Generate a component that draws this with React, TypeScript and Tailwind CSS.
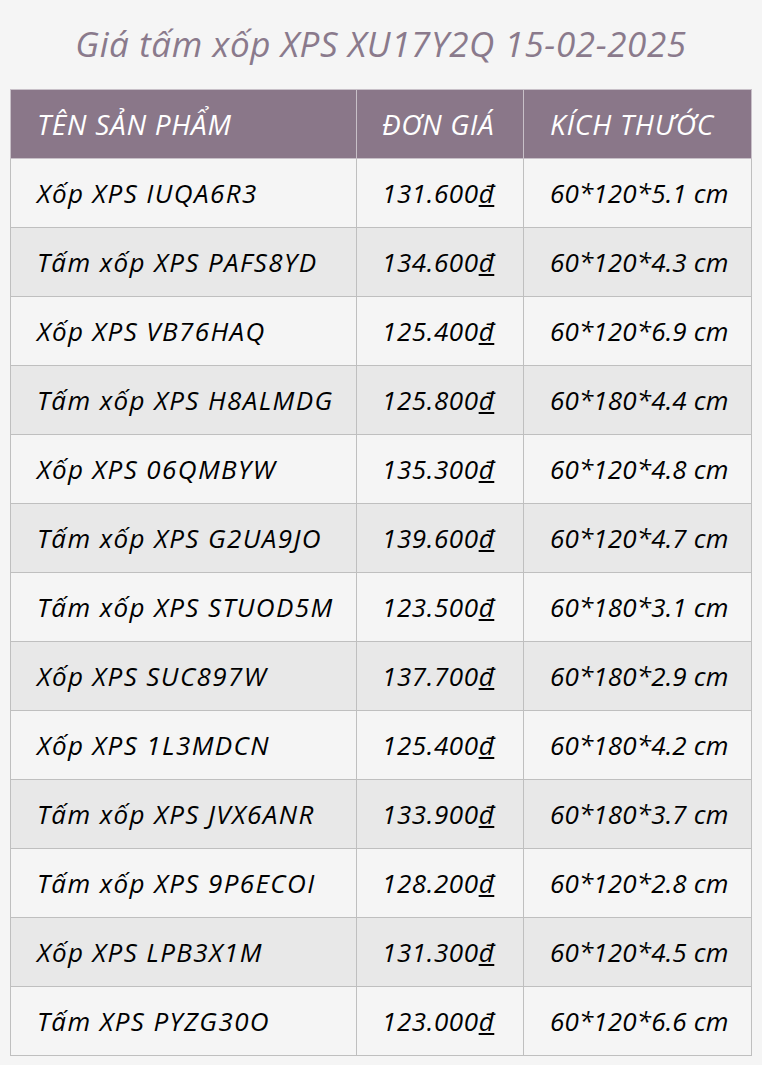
import React from "react";

const rows: [string, string, string][] = [
  ["Xốp XPS IUQA6R3", "131.600", "60*120*5.1 cm"],
  ["Tấm xốp XPS PAFS8YD", "134.600", "60*120*4.3 cm"],
  ["Xốp XPS VB76HAQ", "125.400", "60*120*6.9 cm"],
  ["Tấm xốp XPS H8ALMDG", "125.800", "60*180*4.4 cm"],
  ["Xốp XPS 06QMBYW", "135.300", "60*120*4.8 cm"],
  ["Tấm xốp XPS G2UA9JO", "139.600", "60*120*4.7 cm"],
  ["Tấm xốp XPS STUOD5M", "123.500", "60*180*3.1 cm"],
  ["Xốp XPS SUC897W", "137.700", "60*180*2.9 cm"],
  ["Xốp XPS 1L3MDCN", "125.400", "60*180*4.2 cm"],
  ["Tấm xốp XPS JVX6ANR", "133.900", "60*180*3.7 cm"],
  ["Tấm xốp XPS 9P6ECOI", "128.200", "60*120*2.8 cm"],
  ["Xốp XPS LPB3X1M", "131.300", "60*120*4.5 cm"],
  ["Tấm XPS PYZG30O", "123.000", "60*120*6.6 cm"],
];

export default function App() {
  return (
    <div
      className="w-[762px] h-[1065px] bg-[#f5f5f5] italic"
      style={{ fontFamily: '"Open Sans", "Noto Sans", sans-serif' }}
    >
      <div className="h-[89px] flex items-center justify-center text-[35px] tracking-[0.6px] text-[#8a7a8c]">
        Giá tấm xốp XPS XU17Y2Q 15-02-2025
      </div>
      <div className="px-[10px]">
        <table className="w-[741px] table-fixed border-collapse border border-[#bfbfbf]">
          <colgroup>
            <col className="w-[346px]" />
            <col className="w-[167px]" />
            <col className="w-[228px]" />
          </colgroup>
          <thead>
            <tr className="h-[69px] bg-[#8a7789] text-white text-[28px]">
              <th className="font-normal text-left pl-[26px] tracking-[0.7px] border border-[#c8c0c8]">TÊN SẢN PHẨM</th>
              <th className="font-normal text-left pl-[25px] tracking-[0.6px] border border-[#c8c0c8]">ĐƠN GIÁ</th>
              <th className="font-normal text-left pl-[26px] tracking-[0.8px] border border-[#c8c0c8]">KÍCH THƯỚC</th>
            </tr>
          </thead>
          <tbody>
            {rows.map((r, i) => (
              <tr
                key={i}
                className={`h-[69px] text-[26px] text-black ${i % 2 === 1 ? "bg-[#e8e8e8]" : "bg-[#f5f5f5]"}`}
              >
                <td className="pl-[26px] tracking-[1.4px] border border-[#bfbfbf]">{r[0]}</td>
                <td className="pl-[25px] tracking-[0.6px] border border-[#bfbfbf]">
                  {r[1]}
                  <span className="underline">đ</span>
                </td>
                <td className="pl-[26px] tracking-[0.15px] border border-[#bfbfbf]">{r[2]}</td>
              </tr>
            ))}
          </tbody>
        </table>
      </div>
    </div>
  );
}
